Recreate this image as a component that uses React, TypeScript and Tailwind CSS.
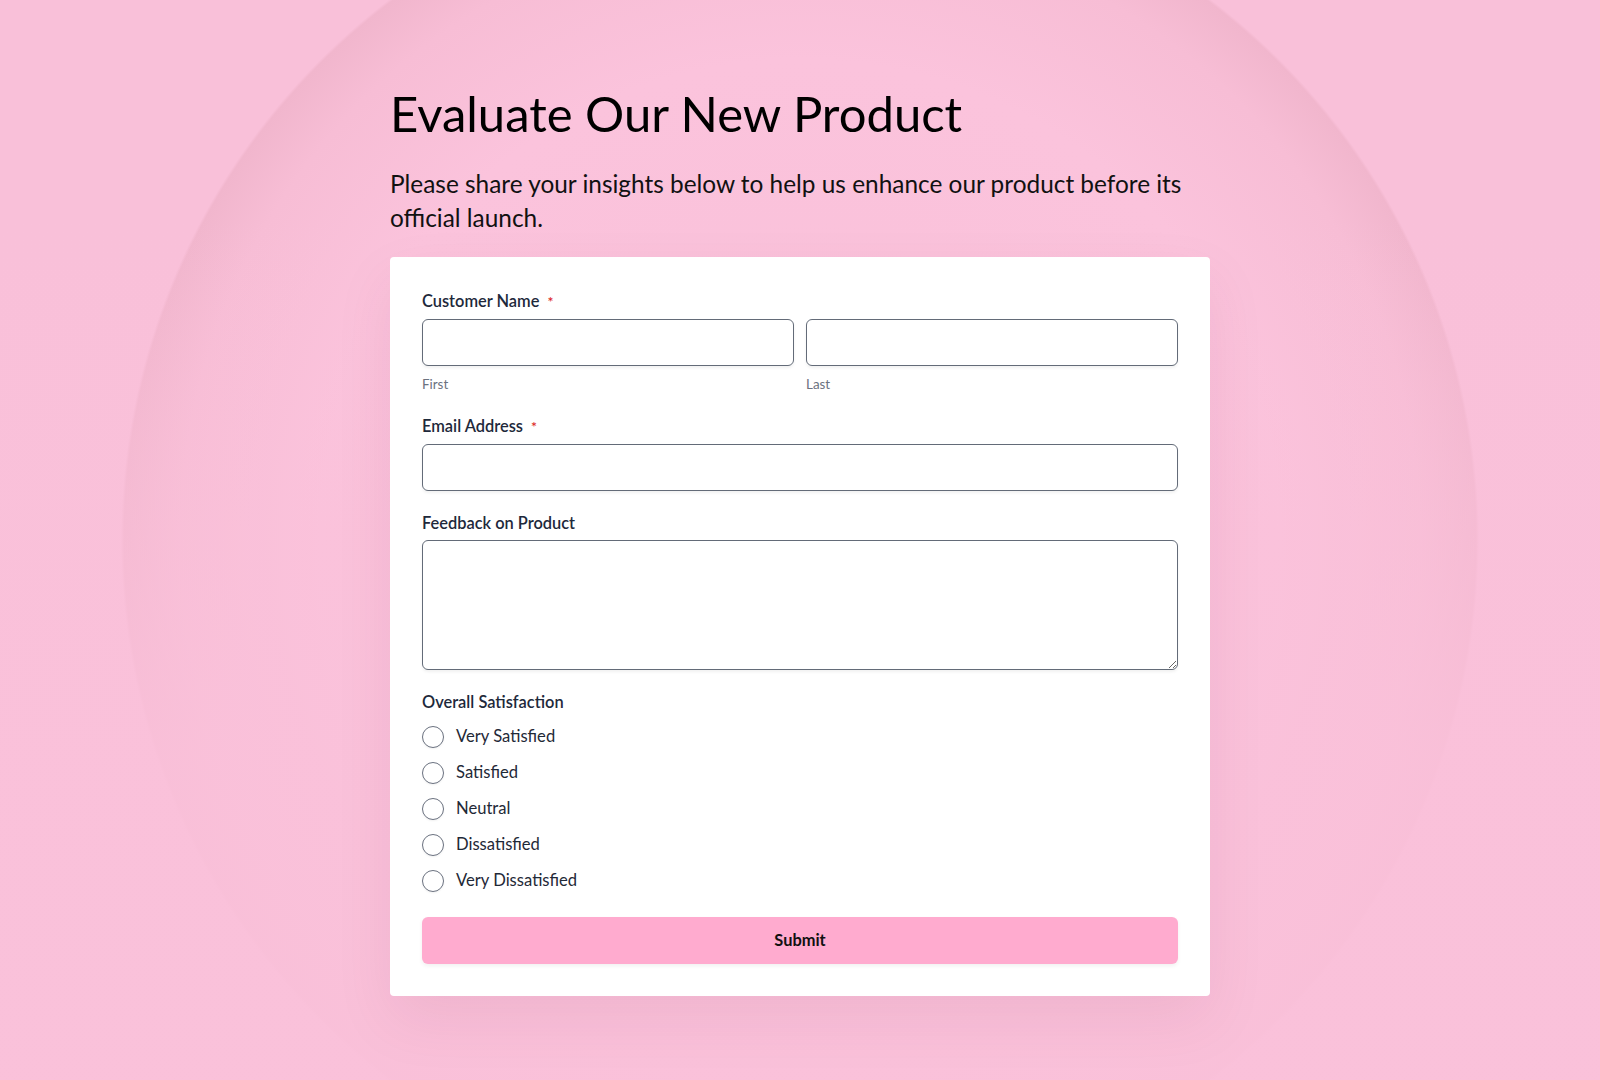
import { useState } from "react";

const options = [
  "Very Satisfied",
  "Satisfied",
  "Neutral",
  "Dissatisfied",
  "Very Dissatisfied",
];

function Label({ text, required }: { text: string; required?: boolean }) {
  return (
    <label className="block text-[16.4px] leading-[23px] font-semibold text-[#1e293b]">
      {text}
      {required && <span className="ml-2 text-[14px] text-[#dc2626]">*</span>}
    </label>
  );
}

const inputCls =
  "block w-full h-[47px] rounded-md border border-[#636b78] bg-white px-3 text-[16px] shadow-[0_2px_3px_rgba(0,0,0,0.06)] outline-none";

export default function App() {
  const [choice, setChoice] = useState<string>("");

  return (
    <div className="min-h-screen flex items-center justify-center bg-[#f9c0d9] bg-[linear-gradient(to_bottom,rgba(249,192,217,0)_0%,rgba(249,192,217,0)_20%,rgba(250,193,218,0.85)_70%,rgba(250,193,218,0.9)_100%),radial-gradient(circle_at_50%_50%,#f9c0d9_0px,#fbc3dc_480px,#f7bdd5_620px,#f1b6cd_676px,#f9c0d9_679px)] font-['Lato','Liberation_Sans',sans-serif]">
      <div className="w-[820px]">
        <h1 className="text-[49px] leading-[1.2] text-black mb-6">Evaluate Our New Product</h1>
        <p className="text-[24.4px] leading-[1.38] text-[#111] mb-[22px]">
          Please share your insights below to help us enhance our product before its official launch.
        </p>

        <form
          className="bg-white rounded p-8 shadow-[0_24px_60px_rgba(120,20,70,0.08)]"
          onSubmit={(e) => e.preventDefault()}
        >
          <div className="flex flex-col gap-5">
            <div>
              <Label text="Customer Name" required />
              <div className="mt-1.5 grid grid-cols-2 gap-3">
                <div>
                  <input className={inputCls} />
                  <div className="mt-2 text-[13.4px] leading-5 text-[#6b7280]">First</div>
                </div>
                <div>
                  <input className={inputCls} />
                  <div className="mt-2 text-[13.4px] leading-5 text-[#6b7280]">Last</div>
                </div>
              </div>
            </div>

            <div>
              <Label text="Email Address" required />
              <input type="email" className={`mt-1.5 ${inputCls}`} />
            </div>

            <div>
              <Label text="Feedback on Product" />
              <textarea className="mt-1.5 block w-full h-[130px] rounded-md border border-[#636b78] bg-white px-3 py-2 text-[16px] shadow-[0_2px_3px_rgba(0,0,0,0.06)] outline-none" />
            </div>

            <div>
              <Label text="Overall Satisfaction" />
              <div className="mt-3 flex flex-col gap-3">
                {options.map((opt) => (
                  <label key={opt} className="flex items-center gap-3 h-6 text-[16.6px] text-[#1f2937]">
                    <input
                      type="radio"
                      name="satisfaction"
                      checked={choice === opt}
                      onChange={() => setChoice(opt)}
                      className="appearance-none size-[22px] rounded-full border border-[#6b7280] bg-white shadow-[0_1px_2px_rgba(0,0,0,0.06)] checked:border-[6px] checked:border-[#f472b6]"
                    />
                    {opt}
                  </label>
                ))}
              </div>
            </div>
          </div>

          <button
            type="submit"
            className="mt-6 w-full h-[47px] rounded-md bg-[#ffabcf] text-[16.4px] font-bold text-[#111] shadow-[0_2px_4px_rgba(0,0,0,0.06)]"
          >
            Submit
          </button>
        </form>
      </div>
    </div>
  );
}
